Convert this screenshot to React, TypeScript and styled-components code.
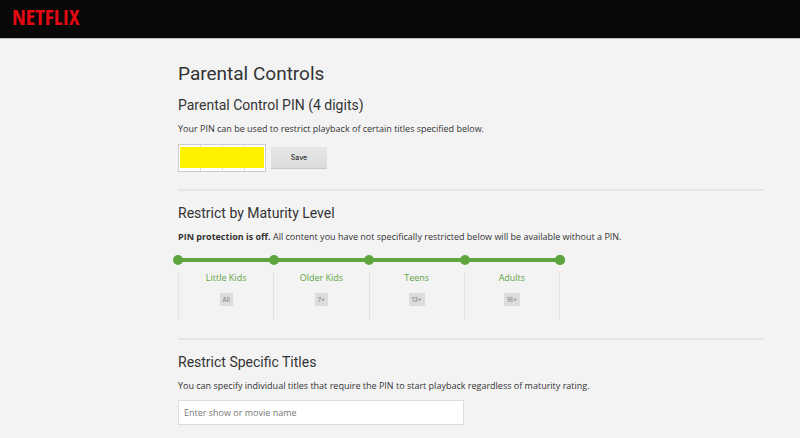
import React from "react";
import styled, { createGlobalStyle } from "styled-components";

const GlobalStyle = createGlobalStyle`
  *, *::before, *::after { box-sizing: border-box; }
  body {
    margin: 0;
    background: #f3f3f3;
    color: #333;
    font-family: "Open Sans", "Liberation Sans", sans-serif;
    font-size: 9px;
    line-height: 12px;
  }
  button, input { font: inherit; color: inherit; }
`;

const Header = styled.header`
  display: flex;
  align-items: flex-start;
  height: 39px;
  padding: 4px 12px 0;
  background: #080808;
  border-bottom: 1px solid #bbb;
`;

const Logo = styled.a`
  color: #e50914;
  font-family: "Open Sans Condensed", "Roboto Condensed", "Liberation Sans", sans-serif;
  font-size: 22px;
  font-weight: 700;
  line-height: 24px;
  text-decoration: none;
`;

const Main = styled.main`
  padding: 24px 36px 12px 178px;
`;

const PageTitle = styled.h1`
  margin: 0;
  font-family: Roboto, sans-serif;
  font-size: 19px;
  line-height: 22px;
  font-weight: 400;
`;

const Section = styled.section<{ $divided?: boolean }>`
  padding-top: ${(p) => (p.$divided ? 14 : 12)}px;
  border-top: ${(p) => (p.$divided ? "2px solid #e6e6e6" : "none")};
`;

const SectionTitle = styled.h2`
  margin: 0 0 10px;
  font-family: Roboto, sans-serif;
  font-size: 14px;
  line-height: 16px;
  font-weight: 400;
`;

const Copy = styled.p`
  margin: 0;
`;

const PinForm = styled.form`
  display: flex;
  align-items: center;
  gap: 5px;
  padding: 9px 0 17px;
`;

const PinGroup = styled.div`
  position: relative;
  display: grid;
  grid-template-columns: repeat(4, 22px);
  height: 28px;
  background: #fff;
  border: 1px solid #ccc;
  width: 88px;
  overflow: hidden;
`;

const PinDigit = styled.input`
  width: 22px;
  min-width: 0;
  padding: 0;
  border: 0;
  border-right: 1px solid #ddd;
  background: transparent;
  text-align: center;
`;

const PinCover = styled.span`
  position: absolute;
  inset: 2px 1px 3px;
  background: #fff200;
`;

const SaveButton = styled.button`
  width: 56px;
  height: 22px;
  padding: 0;
  border: 0;
  border-bottom: 1px solid #c8c8c8;
  background: linear-gradient(#e6e6e6, #dcdcdc);
  font-family: Inter, sans-serif;
  font-size: 7px;
  font-weight: 500;
`;

const Levels = styled.div`
  max-width: 382px;
  padding: 12px 0 18px;
`;

const Slider = styled.div`
  position: relative;
  display: flex;
  align-items: center;
  justify-content: space-between;
  height: 10px;
  margin: 0 -5px;
  background: linear-gradient(#5fa53f, #5fa53f) center / calc(100% - 10px) 4px no-repeat;
`;

const Stop = styled.span`
  width: 10px;
  height: 10px;
  border-radius: 50%;
  background: #5fa53f;
`;

const Range = styled.input`
  position: absolute;
  inset: 0;
  width: 100%;
  height: 10px;
  margin: 0;
  appearance: none;
  background: transparent;
  cursor: pointer;

  &::-webkit-slider-thumb {
    appearance: none;
    width: 10px;
    height: 10px;
    border-radius: 50%;
    background: #5fa53f;
  }
`;

const LevelList = styled.ul`
  display: grid;
  grid-template-columns: repeat(4, 1fr);
  margin: 7px 0 0;
  padding: 0;
  list-style: none;
  border-right: 1px solid #e2e2e2;
`;

const Level = styled.li`
  display: flex;
  flex-direction: column;
  align-items: center;
  gap: 9px;
  height: 48px;
  border-left: 1px solid #e2e2e2;
  color: #5fa53f;
`;

const Rating = styled.span`
  padding: 0 3px;
  background: #dcdcdc;
  color: #777;
  font-family: Inter, sans-serif;
  font-size: 6px;
  line-height: 13px;
`;

const TitleInput = styled.input`
  display: block;
  width: 100%;
  max-width: 286px;
  height: 25px;
  margin-top: 8px;
  padding: 0 5px;
  border: 1px solid #ddd;
  background: #fff;

  &::placeholder { color: #777; opacity: 1; }
`;

const levels = [
  { name: "Little Kids", rating: "All" },
  { name: "Older Kids", rating: "7+" },
  { name: "Teens", rating: "13+" },
  { name: "Adults", rating: "16+" },
];

export default function App() {
  return (
    <>
      <GlobalStyle />
      <Header>
        <Logo href="#">NETFLIX</Logo>
      </Header>
      <Main>
        <PageTitle>Parental Controls</PageTitle>
        <Section>
          <SectionTitle>Parental Control PIN (4 digits)</SectionTitle>
          <Copy>Your PIN can be used to restrict playback of certain titles specified below.</Copy>
          <PinForm onSubmit={(e) => e.preventDefault()}>
            <PinGroup role="group" aria-label="Parental Control PIN">
              {[1, 2, 3, 4].map((n) => (
                <PinDigit key={n} type="text" inputMode="numeric" maxLength={1} aria-label={`Digit ${n}`} />
              ))}
              <PinCover />
            </PinGroup>
            <SaveButton type="submit">Save</SaveButton>
          </PinForm>
        </Section>
        <Section $divided>
          <SectionTitle>Restrict by Maturity Level</SectionTitle>
          <Copy>
            <strong>PIN protection is off.</strong> All content you have not specifically restricted below will be
            available without a PIN.
          </Copy>
          <Levels>
            <Slider>
              {[0, 1, 2, 3, 4].map((n) => (
                <Stop key={n} />
              ))}
              <Range type="range" min={0} max={4} step={1} defaultValue={4} aria-label="Maturity level" />
            </Slider>
            <LevelList>
              {levels.map((level) => (
                <Level key={level.name}>
                  {level.name}
                  <Rating>{level.rating}</Rating>
                </Level>
              ))}
            </LevelList>
          </Levels>
        </Section>
        <Section $divided>
          <SectionTitle>Restrict Specific Titles</SectionTitle>
          <Copy>You can specify individual titles that require the PIN to start playback regardless of maturity rating.</Copy>
          <TitleInput type="text" placeholder="Enter show or movie name" aria-label="Show or movie name" />
        </Section>
      </Main>
    </>
  );
}
